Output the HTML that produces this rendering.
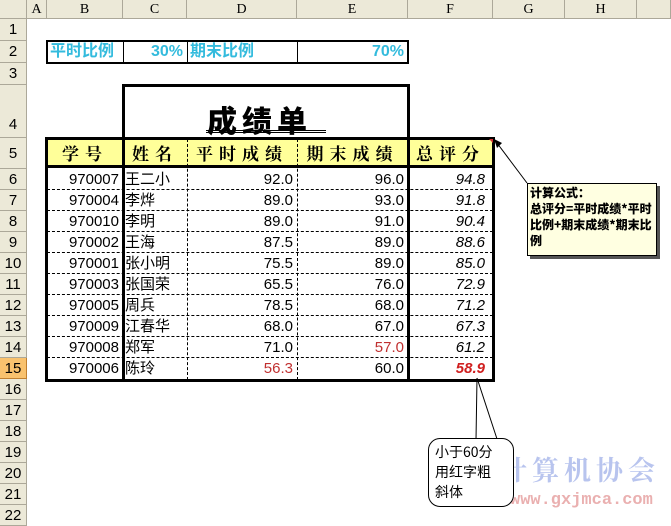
<!DOCTYPE html>
<html><head><meta charset="utf-8"><style>
*{margin:0;padding:0;box-sizing:border-box}
body{width:671px;height:517px;overflow:hidden;background:#fff;position:relative;font-family:"Liberation Sans","Noto Sans CJK SC",sans-serif}
.a{position:absolute}
.ch{position:absolute;top:0;height:19px;background:#ece9d8;border-right:1px solid #aca899;border-bottom:1px solid #aca899;font:14px "Liberation Serif","Noto Serif CJK SC",serif;text-align:center;line-height:19px;color:#000}
.rh{position:absolute;left:0;width:27px;background:#ece9d8;border-right:1px solid #aca899;border-bottom:1px solid #aca899;font:15px "Liberation Sans",sans-serif;text-align:center;color:#000}
.c{position:absolute;font-size:15px;height:21px;line-height:21px;white-space:nowrap}
.r{text-align:right;padding-right:4px}
.hd{position:absolute;top:140px;height:27px;line-height:27px;text-align:center;font:bold 17px "Noto Serif CJK SC",serif;letter-spacing:6px}
</style></head><body>
<div class="ch" style="left:0;width:27px"></div>
<div class="ch" style="left:27px;width:20px">A</div>
<div class="ch" style="left:47px;width:76px">B</div>
<div class="ch" style="left:123px;width:64px">C</div>
<div class="ch" style="left:187px;width:110px">D</div>
<div class="ch" style="left:297px;width:111px">E</div>
<div class="ch" style="left:408px;width:85px">F</div>
<div class="ch" style="left:493px;width:72px">G</div>
<div class="ch" style="left:565px;width:72px">H</div>
<div class="ch" style="left:637px;width:34px"></div>
<div class="rh" style="top:19px;height:22px;line-height:22px">1</div>
<div class="rh" style="top:41px;height:22px;line-height:22px">2</div>
<div class="rh" style="top:63px;height:22px;line-height:22px">3</div>
<div class="rh" style="top:85px;height:53px;line-height:80px">4</div>
<div class="rh" style="top:138px;height:31px;line-height:31px">5</div>
<div class="rh" style="top:169px;height:21px;line-height:21px">6</div>
<div class="rh" style="top:190px;height:21px;line-height:21px">7</div>
<div class="rh" style="top:211px;height:21px;line-height:21px">8</div>
<div class="rh" style="top:232px;height:21px;line-height:21px">9</div>
<div class="rh" style="top:253px;height:21px;line-height:21px">10</div>
<div class="rh" style="top:274px;height:21px;line-height:21px">11</div>
<div class="rh" style="top:295px;height:21px;line-height:21px">12</div>
<div class="rh" style="top:316px;height:21px;line-height:21px">13</div>
<div class="rh" style="top:337px;height:21px;line-height:21px">14</div>
<div class="rh" style="top:358px;height:21px;line-height:21px;background:#f9c26e;border-color:#c08030">15</div>
<div class="rh" style="top:379px;height:21px;line-height:21px">16</div>
<div class="rh" style="top:400px;height:21px;line-height:21px">17</div>
<div class="rh" style="top:421px;height:21px;line-height:21px">18</div>
<div class="rh" style="top:442px;height:21px;line-height:21px">19</div>
<div class="rh" style="top:463px;height:21px;line-height:21px">20</div>
<div class="rh" style="top:484px;height:21px;line-height:21px">21</div>
<div class="rh" style="top:505px;height:21px;line-height:21px">22</div>

<div class="a" style="left:46px;top:40px;width:363px;height:24px;border:2px solid #000"></div>
<div class="a" style="left:123px;top:41px;width:1px;height:22px;background:#000"></div>
<div class="a" style="left:187px;top:41px;width:1px;height:22px;background:#000"></div>
<div class="a" style="left:297px;top:41px;width:1px;height:22px;background:#000"></div>
<div class="c" style="left:50px;top:41px;color:#33bbdd;font-weight:bold;font-size:16px">平时比例</div>
<div class="c r" style="left:123px;top:41px;width:64px;color:#33bbdd;font-weight:bold;font-size:16px">30%</div>
<div class="c" style="left:190px;top:41px;color:#33bbdd;font-weight:bold;font-size:16px">期末比例</div>
<div class="c r" style="left:297px;top:41px;width:111px;color:#33bbdd;font-weight:bold;font-size:16px">70%</div>

<div class="a" style="left:122px;top:84px;width:288px;height:56px;border:3px solid #000;border-bottom:none"></div>
<div class="a" style="left:207px;top:97px;font:900 30px 'Noto Sans CJK SC',sans-serif;letter-spacing:5px">成绩单</div>
<div class="a" style="left:206px;top:130px;width:120px;border-top:1px solid #000;border-bottom:1px solid #000;height:3px"></div>

<div class="a" style="left:47px;top:139px;width:446px;height:28px;background:#ffff99"></div>
<div class="a" style="left:47px;top:165px;width:446px;height:1px;background:#000"></div>
<div class="hd" style="left:47px;width:76px">学号</div>
<div class="hd" style="left:123px;width:64px">姓名</div>
<div class="hd" style="left:187px;width:110px">平时成绩</div>
<div class="hd" style="left:297px;width:111px">期末成绩</div>
<div class="hd" style="left:408px;width:85px">总评分</div>

<div class="a" style="left:187px;top:139px;height:241px;border-left:1px dashed #000"></div>
<div class="a" style="left:297px;top:139px;height:241px;border-left:1px dashed #000"></div>
<div class="a" style="left:47px;top:189px;width:446px;border-top:1px dashed #000"></div>
<div class="a" style="left:47px;top:210px;width:446px;border-top:1px dashed #000"></div>
<div class="a" style="left:47px;top:231px;width:446px;border-top:1px dashed #000"></div>
<div class="a" style="left:47px;top:252px;width:446px;border-top:1px dashed #000"></div>
<div class="a" style="left:47px;top:273px;width:446px;border-top:1px dashed #000"></div>
<div class="a" style="left:47px;top:294px;width:446px;border-top:1px dashed #000"></div>
<div class="a" style="left:47px;top:315px;width:446px;border-top:1px dashed #000"></div>
<div class="a" style="left:47px;top:336px;width:446px;border-top:1px dashed #000"></div>
<div class="a" style="left:47px;top:357px;width:446px;border-top:1px dashed #000"></div>
<div class="a" style="left:45px;top:137px;width:450px;height:245px;border:3px solid #000"></div>
<div class="a" style="left:45px;top:166px;width:450px;height:2px;background:#000"></div>
<div class="a" style="left:122px;top:137px;width:3px;height:245px;background:#000"></div>
<div class="a" style="left:407px;top:137px;width:3px;height:245px;background:#000"></div>

<div style="position:absolute;left:0;top:169px">
<div class="c r" style="left:47px;top:0;width:76px">970007</div><div class="c" style="left:125px;top:0">王二小</div><div class="c r" style="left:187px;top:0;width:110px">92.0</div><div class="c r" style="left:297px;top:0;width:111px">96.0</div><div class="c r" style="left:408px;top:0;width:85px;font-style:italic;padding-right:8px">94.8</div>
<div class="c r" style="left:47px;top:21px;width:76px">970004</div><div class="c" style="left:125px;top:21px">李烨</div><div class="c r" style="left:187px;top:21px;width:110px">89.0</div><div class="c r" style="left:297px;top:21px;width:111px">93.0</div><div class="c r" style="left:408px;top:21px;width:85px;font-style:italic;padding-right:8px">91.8</div>
<div class="c r" style="left:47px;top:42px;width:76px">970010</div><div class="c" style="left:125px;top:42px">李明</div><div class="c r" style="left:187px;top:42px;width:110px">89.0</div><div class="c r" style="left:297px;top:42px;width:111px">91.0</div><div class="c r" style="left:408px;top:42px;width:85px;font-style:italic;padding-right:8px">90.4</div>
<div class="c r" style="left:47px;top:63px;width:76px">970002</div><div class="c" style="left:125px;top:63px">王海</div><div class="c r" style="left:187px;top:63px;width:110px">87.5</div><div class="c r" style="left:297px;top:63px;width:111px">89.0</div><div class="c r" style="left:408px;top:63px;width:85px;font-style:italic;padding-right:8px">88.6</div>
<div class="c r" style="left:47px;top:84px;width:76px">970001</div><div class="c" style="left:125px;top:84px">张小明</div><div class="c r" style="left:187px;top:84px;width:110px">75.5</div><div class="c r" style="left:297px;top:84px;width:111px">89.0</div><div class="c r" style="left:408px;top:84px;width:85px;font-style:italic;padding-right:8px">85.0</div>
<div class="c r" style="left:47px;top:105px;width:76px">970003</div><div class="c" style="left:125px;top:105px">张国荣</div><div class="c r" style="left:187px;top:105px;width:110px">65.5</div><div class="c r" style="left:297px;top:105px;width:111px">76.0</div><div class="c r" style="left:408px;top:105px;width:85px;font-style:italic;padding-right:8px">72.9</div>
<div class="c r" style="left:47px;top:126px;width:76px">970005</div><div class="c" style="left:125px;top:126px">周兵</div><div class="c r" style="left:187px;top:126px;width:110px">78.5</div><div class="c r" style="left:297px;top:126px;width:111px">68.0</div><div class="c r" style="left:408px;top:126px;width:85px;font-style:italic;padding-right:8px">71.2</div>
<div class="c r" style="left:47px;top:147px;width:76px">970009</div><div class="c" style="left:125px;top:147px">江春华</div><div class="c r" style="left:187px;top:147px;width:110px">68.0</div><div class="c r" style="left:297px;top:147px;width:111px">67.0</div><div class="c r" style="left:408px;top:147px;width:85px;font-style:italic;padding-right:8px">67.3</div>
<div class="c r" style="left:47px;top:168px;width:76px">970008</div><div class="c" style="left:125px;top:168px">郑军</div><div class="c r" style="left:187px;top:168px;width:110px">71.0</div><div class="c r" style="left:297px;top:168px;width:111px;color:#c03030">57.0</div><div class="c r" style="left:408px;top:168px;width:85px;font-style:italic;padding-right:8px">61.2</div>
<div class="c r" style="left:47px;top:189px;width:76px">970006</div><div class="c" style="left:125px;top:189px">陈玲</div><div class="c r" style="left:187px;top:189px;width:110px;color:#c03030">56.3</div><div class="c r" style="left:297px;top:189px;width:111px">60.0</div><div class="c r" style="left:408px;top:189px;width:85px;font-style:italic;font-weight:bold;color:#d02020;padding-right:8px">58.9</div>
</div>

<svg class="a" style="left:0;top:0" width="671" height="517">
<line x1="527" y1="183" x2="497" y2="143" stroke="#000" stroke-width="1"/>
<polygon points="494,139 502,143 497,148" fill="#000"/>
<polygon points="489,139 493,139 493,143" fill="#d03030"/>
<path d="M477,378 L476,440 M477,378 L498,442" stroke="#000" fill="none"/>
<text x="500" y="480" font-family="Noto Serif CJK SC,serif" font-size="27" fill="#b8c4ee" font-weight="bold" letter-spacing="5">计算机协会</text>
<text x="510" y="504" font-family="Liberation Mono,monospace" font-size="17" fill="#eab0b0" font-weight="bold">www.gxjmca.com</text>
<polygon points="455,465 490,495 470,500" fill="#f0b0b0" opacity="0.8"/>
</svg>
<div class="a" style="left:530px;top:186px;width:130px;height:73px;background:#555"></div>
<div class="a" style="left:527px;top:183px;width:130px;height:73px;background:#ffffe1;border:1px solid #000;font:900 12px 'Noto Sans CJK SC',sans-serif;line-height:16px;padding:1px 2px">计算公式：<br>总评分=平时成绩*平时比例+期末成绩*期末比例</div>
<div class="a" style="left:428px;top:438px;width:86px;height:69px;background:#fff;border:1px solid #000;border-radius:12px;font:14px 'Noto Sans CJK SC',sans-serif;line-height:20px;padding:3px 0 0 6px">小于60分<br>用红字粗<br>斜体</div>
</body></html>
